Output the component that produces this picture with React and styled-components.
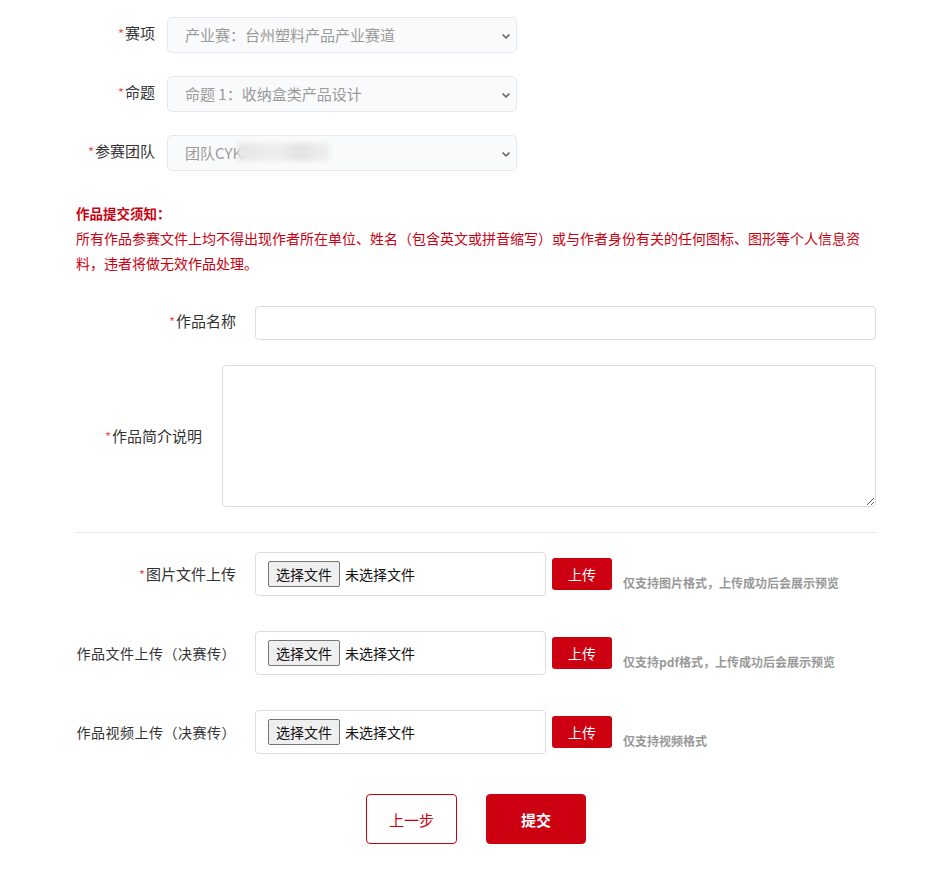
import React from 'react';
import styled, { createGlobalStyle } from 'styled-components';

const RED = '#cc0011';

const GlobalStyle = createGlobalStyle`
  body {
    margin: 0;
    background: #fff;
    font-family: "Noto Sans CJK SC", "Noto Sans", "Liberation Sans", sans-serif;
    color: #333;
  }
`;

const Page = styled.div`
  width: 800px;
  padding: 17px 0 40px 76px;
  display: flex;
  flex-direction: column;
`;

const Row = styled.div`
  display: flex;
  align-items: center;
  gap: ${({ $gap }) => $gap || 12}px;
  margin-top: ${({ $top }) => $top || 0}px;
`;

const Label = styled.label`
  width: ${({ $width }) => $width}px;
  flex-shrink: 0;
  text-align: right;
  font-size: ${({ $small }) => ($small ? 14 : 15)}px;
  letter-spacing: ${({ $small }) => ($small ? 0.5 : 0)}px;
  line-height: 20px;
  white-space: nowrap;
  color: #333;
  margin-top: ${({ $lift }) => ($lift ? -4 : 0)}px;
`;

const Star = styled.span`
  color: #ee5555;
  font-size: 13px;
  margin-right: 1px;
`;

const SelectBox = styled.div`
  position: relative;
  width: 350px;
  height: 36px;
  box-sizing: border-box;
  border: 1px solid #e5e7eb;
  border-radius: 5px;
  background: #f9fafb;
  display: flex;
  align-items: center;
  padding: 0 0 2px 17px;
  font-size: 15px;
  color: #9a9a9a;
`;

const Chevron = styled.svg`
  position: absolute;
  right: 5px;
  top: 13px;
  width: 10px;
  height: 10px;
`;

const Blur = styled.span`
  display: inline-block;
  width: 92px;
  height: 18px;
  margin-left: -4px;
  background: linear-gradient(90deg, #e6e6e6, #eeeeee 40%, #e4e4e4 70%, #f0f0f0);
  filter: blur(2px);
`;

const Notice = styled.div`
  margin-top: 30px;
  padding-right: 8px;
  font-size: 14px;
  line-height: 25px;
  color: ${RED};
`;

const NoticeTitle = styled.div`
  font-weight: 700;
  font-size: 13.5px;
`;

const TextInput = styled.input`
  flex: 1;
  height: 34px;
  box-sizing: border-box;
  border: 1px solid #ddd;
  border-radius: 4px;
  outline: none;
`;

const TextArea = styled.textarea`
  flex: 1;
  height: 142px;
  box-sizing: border-box;
  border: 1px solid #ddd;
  border-radius: 4px;
  outline: none;
`;

const Divider = styled.hr`
  width: 100%;
  margin: 25px 0 0;
  border: none;
  border-top: 1px solid #e8e8e8;
`;

const FileBox = styled.div`
  width: 291px;
  height: 44px;
  box-sizing: border-box;
  border: 1px solid #ddd;
  border-radius: 4px;
  display: flex;
  align-items: center;
  padding-left: 12px;
  gap: 5px;
  font-size: 14px;
  color: #111;
`;

const FileButton = styled.span`
  display: inline-flex;
  align-items: center;
  justify-content: center;
  width: 72px;
  height: 26px;
  box-sizing: border-box;
  background: #efefef;
  border: 1px solid #767676;
  border-radius: 2px;
`;

const UploadButton = styled.button`
  width: 60px;
  height: 32px;
  margin-left: -13px;
  border: none;
  border-radius: 3px;
  background: ${RED};
  color: #fff;
  font-family: inherit;
  font-size: 14px;
`;

const Hint = styled.span`
  margin: 16px 0 0 -8px;
  font-size: 12px;
  font-weight: 700;
  color: #999;
`;

const Actions = styled.div`
  display: flex;
  justify-content: center;
  gap: 29px;
  margin-top: 40px;
`;

const ActionButton = styled.button`
  width: ${({ $primary }) => ($primary ? 100 : 91)}px;
  height: 50px;
  box-sizing: border-box;
  border-radius: 4px;
  border: 1px solid ${RED};
  background: ${({ $primary }) => ($primary ? RED : '#fff')};
  color: ${({ $primary }) => ($primary ? '#fff' : RED)};
  font-family: inherit;
  font-size: 15px;
  font-weight: ${({ $primary }) => ($primary ? 700 : 400)};
`;

const ChevronIcon = () => (
  <Chevron viewBox="0 0 10 10">
    <path d="M1.5 3.5 L5 6.8 L8.5 3.5" fill="none" stroke="#666" strokeWidth="1.6" />
  </Chevron>
);

const SelectRow = ({ label, top, children }) => (
  <Row $top={top} $gap={12}>
    <Label $width={79} $lift>
      <Star>*</Star>
      {label}
    </Label>
    <SelectBox>
      {children}
      <ChevronIcon />
    </SelectBox>
  </Row>
);

const UploadRow = ({ label, required, small, hint, top }) => (
  <Row $top={top} $gap={19}>
    <Label $width={160} $small={small}>
      {required && <Star>*</Star>}
      {label}
    </Label>
    <FileBox>
      <FileButton>选择文件</FileButton>
      未选择文件
    </FileBox>
    <UploadButton>上传</UploadButton>
    <Hint>{hint}</Hint>
  </Row>
);

export default function App() {
  return (
    <>
      <GlobalStyle />
      <Page>
        <SelectRow label="赛项">产业赛：台州塑料产品产业赛道</SelectRow>
        <SelectRow label="命题" top={23}>命题 1：收纳盒类产品设计</SelectRow>
        <SelectRow label="参赛团队" top={23}>
          团队CYK
          <Blur />
        </SelectRow>

        <Notice>
          <NoticeTitle>作品提交须知：</NoticeTitle>
          所有作品参赛文件上均不得出现作者所在单位、姓名（包含英文或拼音缩写）或与作者身份有关的任何图标、图形等个人信息资料，违者将做无效作品处理。
        </Notice>

        <Row $top={30} $gap={19}>
          <Label $width={160} $lift>
            <Star>*</Star>
            作品名称
          </Label>
          <TextInput type="text" />
        </Row>

        <Row $top={25} $gap={20}>
          <Label $width={126}>
            <Star>*</Star>
            作品简介说明
          </Label>
          <TextArea />
        </Row>

        <Divider />

        <UploadRow
          top={19}
          required
          label="图片文件上传"
          hint="仅支持图片格式，上传成功后会展示预览"
        />
        <UploadRow
          top={35}
          small
          label="作品文件上传（决赛传）"
          hint="仅支持pdf格式，上传成功后会展示预览"
        />
        <UploadRow
          top={35}
          small
          label="作品视频上传（决赛传）"
          hint="仅支持视频格式"
        />

        <Actions>
          <ActionButton>上一步</ActionButton>
          <ActionButton $primary>提交</ActionButton>
        </Actions>
      </Page>
    </>
  );
}
